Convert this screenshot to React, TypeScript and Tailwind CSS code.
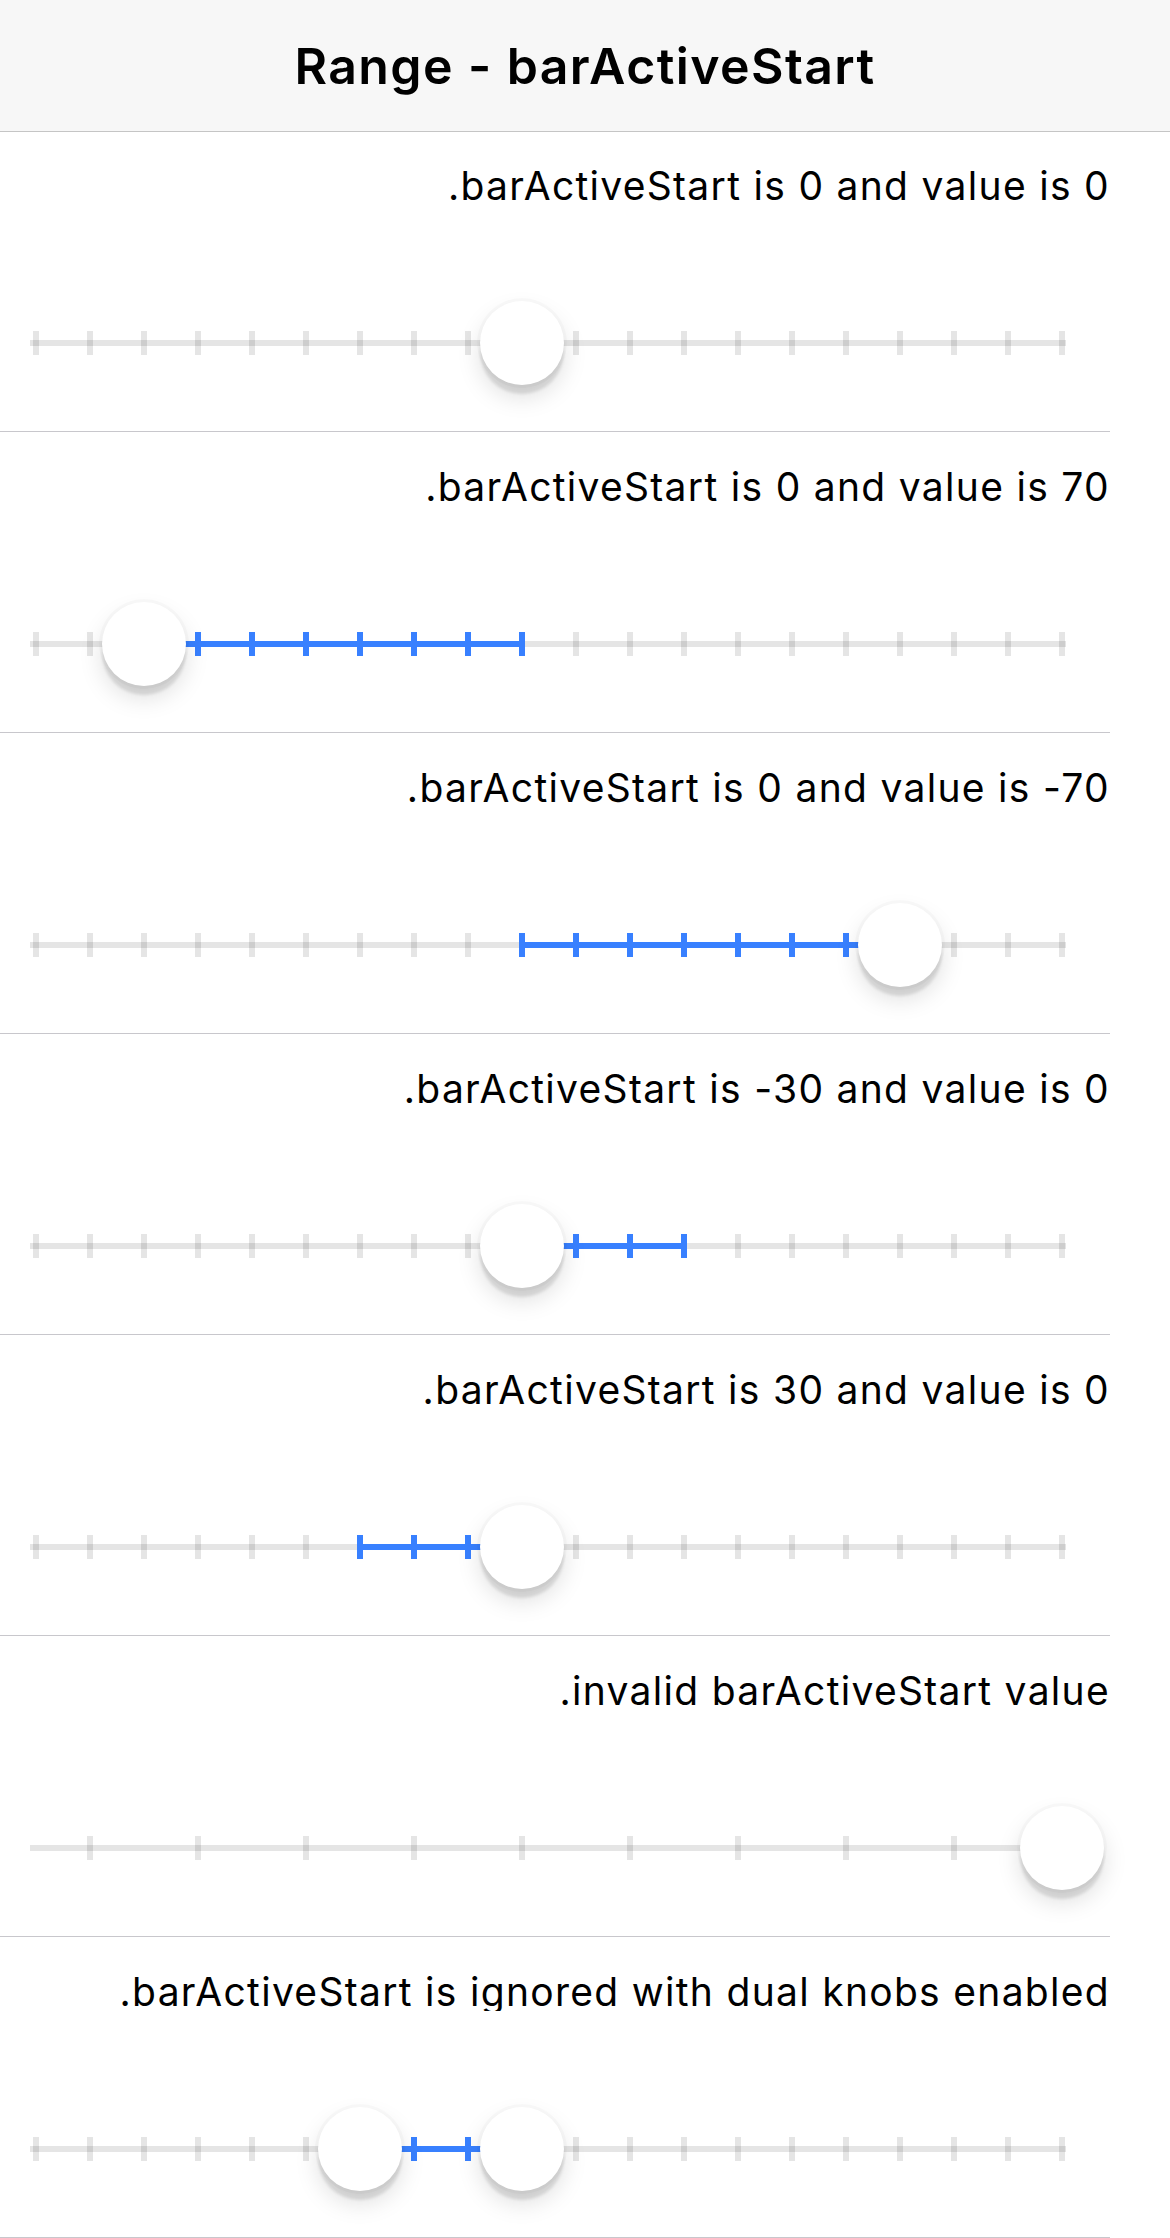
const TICKS = Array.from({ length: 20 }, (_, i) => 36 + i * 54);
const WIDE_TICKS = Array.from({ length: 10 }, (_, i) => 90 + i * 108);

type Row = {
  label: string;
  wide?: boolean;
  knobs: number[];
  bar: [number, number] | null;
};

const rows: Row[] = [
  { label: ".barActiveStart is 0 and value is 0", knobs: [522], bar: null },
  { label: ".barActiveStart is 0 and value is 70", knobs: [144], bar: [144, 522] },
  { label: ".barActiveStart is 0 and value is -70", knobs: [900], bar: [522, 900] },
  { label: ".barActiveStart is -30 and value is 0", knobs: [522], bar: [522, 684] },
  { label: ".barActiveStart is 30 and value is 0", knobs: [522], bar: [360, 522] },
  { label: ".invalid barActiveStart value", wide: true, knobs: [1062], bar: null },
  { label: ".barActiveStart is ignored with dual knobs enabled", knobs: [360, 522], bar: [360, 522] },
];

function Slider({ wide, knobs, bar }: Omit<Row, "label">) {
  const ticks = wide ? WIDE_TICKS : TICKS;
  return (
    <div className="relative grid h-[84px] w-full items-center">
      <div className="col-start-1 row-start-1 ml-[30px] h-[6px] w-[1036px] bg-black/10" />
      {bar && (
        <div
          className="col-start-1 row-start-1 h-[6px] bg-[#3880ff]"
          style={{ marginLeft: bar[0], width: bar[1] - bar[0] }}
        />
      )}
      <div
        className={`col-start-1 row-start-1 flex justify-between ${wide ? "ml-[87px] w-[978px]" : "ml-[33px] w-[1032px]"}`}
      >
        {ticks.map((x) => {
          const active = bar !== null && x >= bar[0] && x <= bar[1];
          return (
            <span key={x} className={`h-[24px] w-[6px] ${active ? "bg-[#3880ff]" : "bg-black/10"}`} />
          );
        })}
      </div>
      {knobs.map((x) => (
        <div
          key={x}
          className="absolute top-0 h-[84px] w-[84px] rounded-full bg-white shadow-[0_9px_3px_rgba(0,0,0,0.1),0_12px_24px_rgba(0,0,0,0.13),0_0_0_3px_rgba(0,0,0,0.02)]"
          style={{ left: x - 42 }}
        />
      ))}
    </div>
  );
}

export default function App() {
  return (
    <div className="min-h-[2238px] bg-white font-['Inter','Liberation_Sans',sans-serif] text-black">
      <header className="flex h-[132px] items-center justify-center border-b border-black/20 bg-[#f7f7f7]">
        <h1 className="text-[50px] font-semibold leading-[60px] tracking-[1.4px]">Range - barActiveStart</h1>
      </header>

      {rows.map((row) => (
        <section key={row.label} className="h-[301px] overflow-hidden">
          <div className="flex h-[300px] w-[1110px] flex-col gap-[96px] border-b border-[#c8c7cc] pt-[35px]">
            <p className="h-[38px] overflow-hidden text-right text-[39px] leading-[38px] tracking-[1.3px]">
              {row.label}
            </p>
            <div className="w-[1170px]">
              <Slider wide={row.wide} knobs={row.knobs} bar={row.bar} />
            </div>
          </div>
        </section>
      ))}
    </div>
  );
}
